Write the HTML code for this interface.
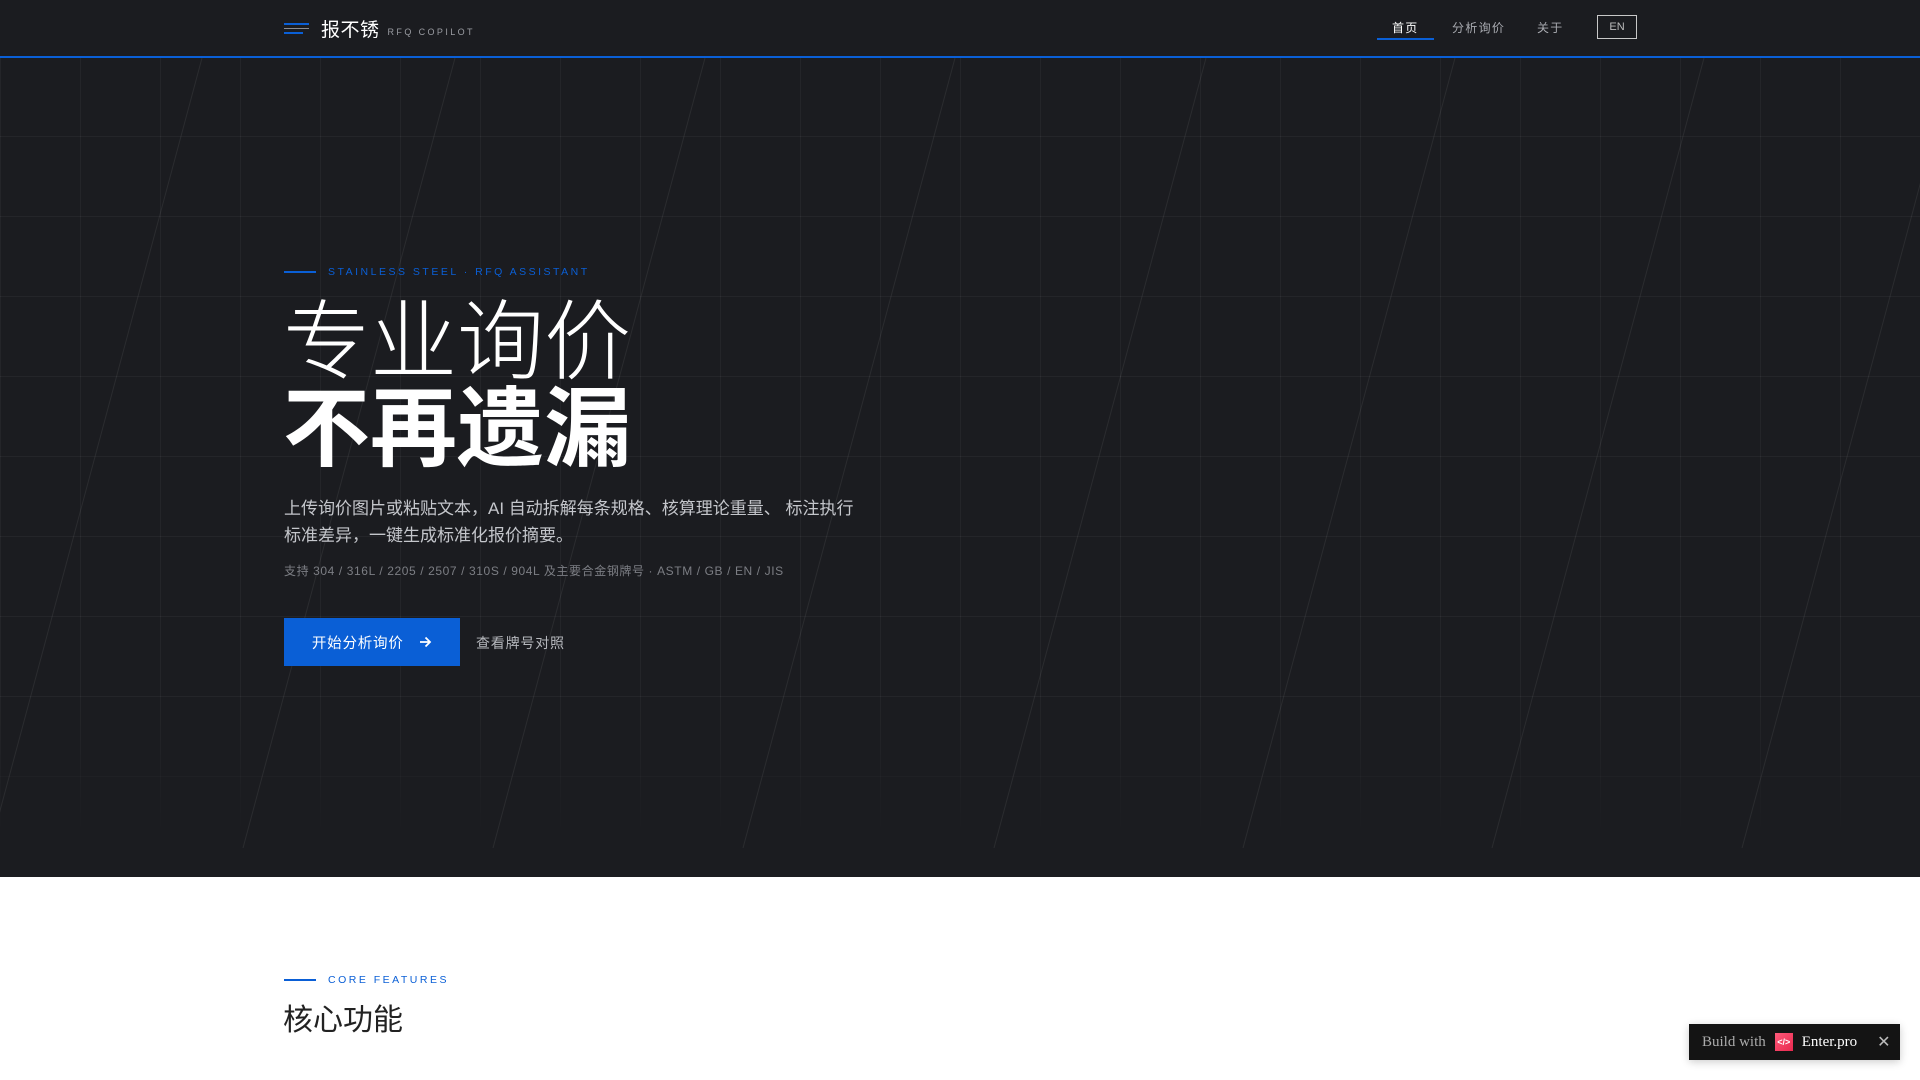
<!DOCTYPE html>
<html><head><meta charset="utf-8">
<style>
*{margin:0;padding:0;box-sizing:border-box}
body{width:1920px;height:1080px;overflow:hidden;background:#fff;font-family:"Liberation Sans","Noto Sans CJK SC",sans-serif;position:relative}
.hero{position:absolute;left:0;top:0;width:1920px;height:877px;background:#1b1c20;overflow:hidden}
.grid{position:absolute;left:0;top:58px;width:1920px;height:790px;
background-image:linear-gradient(to right,rgba(255,255,255,0.045) 1px,transparent 1px),linear-gradient(to bottom,rgba(255,255,255,0.045) 1px,transparent 1px);
background-size:80px 80px;background-position:0 -2px;
-webkit-mask-image:linear-gradient(to bottom,#000 80%,transparent 100%);mask-image:linear-gradient(to bottom,#000 80%,transparent 100%)}
svg.diag{position:absolute;left:0;top:58px}
header{position:absolute;left:0;top:0;width:1920px;height:58px;background:#1b1c20;border-bottom:2px solid #0a5fd6;z-index:2}
.logo{position:absolute;left:284px;top:15px;display:flex;align-items:center}
.bars{width:25px;height:14px;position:relative;margin-right:12px}
.bars i{position:absolute;left:0;height:2px;background:#0a5fd6}
.logo b{font-weight:400;color:#fff;font-size:19px;letter-spacing:0.5px}
.logo span{color:#9a9ca2;font-size:9px;letter-spacing:2.4px;margin-left:8px;margin-top:6px}
.nav a{position:absolute;top:19px;font-size:12px;color:#a8aab0;letter-spacing:1.3px;text-decoration:none}
.ul{position:absolute;left:1377px;top:38px;width:57px;height:2px;background:#0a5fd6}
.en{position:absolute;left:1597px;top:15px;width:40px;height:24px;border:1px solid #c8c8c8;color:#bbb;font-size:11px;text-align:center;line-height:22px}
.eb{position:absolute;display:flex;align-items:center;font-size:10.5px;letter-spacing:2.5px;color:#0a5fd6}
.eb i{display:inline-block;width:32px;height:1.5px;background:#0a5fd6;margin-right:12px}
h1{position:absolute;left:283px;top:292px;color:#fff;font-size:87px;line-height:87px;font-weight:300;letter-spacing:0;font-family:"Noto Sans CJK SC",sans-serif}
h1 b{display:block;font-weight:700}
.p{position:absolute;left:284px;top:495px;width:575px;color:#c4c6cb;font-size:17px;line-height:27px}
.sm{position:absolute;left:284px;top:562px;color:#7c7e84;font-size:12px;letter-spacing:.6px}
.btn{position:absolute;left:284px;top:618px;width:176px;height:48px;background:#0a5fd6;color:#fff;font-size:14.5px;display:flex;align-items:center;justify-content:center;letter-spacing:.8px}
.lk{position:absolute;left:476px;top:633px;color:#b6b8bd;font-size:14px;letter-spacing:.8px}
h2{position:absolute;left:283px;top:995px;font-size:30px;font-weight:400;color:#222;font-family:"Noto Sans CJK SC",sans-serif}
.badge{position:absolute;left:1689px;top:1024px;width:211px;height:36px;background:#141414;box-shadow:0 2px 8px rgba(0,0,0,.2);display:flex;align-items:center;font-family:"Liberation Serif",serif;font-size:15px}
</style></head><body>
<div class="hero">
<div class="grid"></div>
<svg class="diag" width="1920" height="790"><g stroke="rgba(255,255,255,0.07)" stroke-width="1">
<line x1="202" y1="0" x2="-10" y2="790"/><line x1="455" y1="0" x2="243" y2="790"/><line x1="705" y1="0" x2="493" y2="790"/><line x1="955" y1="0" x2="743" y2="790"/><line x1="1206" y1="0" x2="994" y2="790"/><line x1="1455" y1="0" x2="1243" y2="790"/><line x1="1704" y1="0" x2="1492" y2="790"/><line x1="1954" y1="0" x2="1742" y2="790"/></g></svg>
<div class="eb" style="left:284px;top:266px"><i></i>STAINLESS STEEL · RFQ ASSISTANT</div>
<h1>专业询价<b>不再遗漏</b></h1>
<div class="p">上传询价图片或粘贴文本，AI 自动拆解每条规格、核算理论重量、 标注执行标准差异，一键生成标准化报价摘要。</div>
<div class="sm">支持 304 / 316L / 2205 / 2507 / 310S / 904L 及主要合金钢牌号 · ASTM / GB / EN / JIS</div>
<div class="btn">开始分析询价&nbsp;&nbsp;&nbsp;<svg width="14" height="14" viewBox="0 0 14 14"><path d="M2 7h10M7.5 2.5L12 7l-4.5 4.5" stroke="#fff" stroke-width="1.8" fill="none"/></svg></div>
<div class="lk">查看牌号对照</div>
</div>
<header>
<div class="logo"><div class="bars"><i style="top:1px;width:25px"></i><i style="top:6px;width:25px;background:#8a8c92;height:1px"></i><i style="top:10px;width:19px"></i></div><b>报不锈</b><span>RFQ COPILOT</span></div>
<div class="nav"><a style="left:1392px;color:#fff">首页</a><a style="left:1452px">分析询价</a><a style="left:1537px">关于</a></div>
<div class="ul"></div>
<div class="en">EN</div>
</header>
<div class="eb" style="left:284px;top:974px"><i></i>CORE FEATURES</div>
<h2>核心功能</h2>
<div class="badge"><span style="color:#aaa;margin-left:13px">Build with</span>
<span style="width:18px;height:18px;background:linear-gradient(135deg,#ff5a7a,#e8284e);margin-left:9px;color:#fff;font:bold 9px 'Liberation Sans';display:flex;align-items:center;justify-content:center">&lt;/&gt;</span>
<span style="color:#fff;margin-left:9px">Enter.pro</span><span style="color:#bbb;margin-left:20px;font-family:'Liberation Sans';font-size:16px">✕</span></div>
</body></html>
